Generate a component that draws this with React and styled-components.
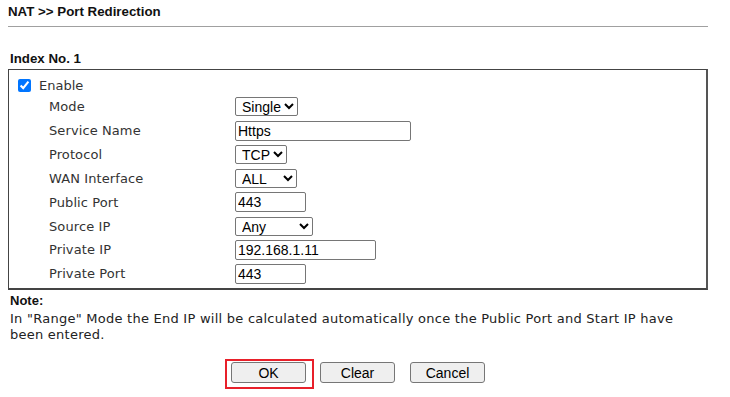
import React from "react";
import styled, { createGlobalStyle } from "styled-components";

const Global = createGlobalStyle`
  html, body { margin: 0; padding: 0; background: #fff; }
  body { font-family: "DejaVu Sans", Verdana, sans-serif; color: #333; }
`;

const Page = styled.div`
  width: 730px;
  height: 397px;
  padding: 0 22px 0 8px;
  box-sizing: border-box;
  overflow: hidden;
`;

const Title = styled.div`
  font-family: "Liberation Sans", Arial, sans-serif;
  font-weight: bold;
  font-size: 13.3px;
  color: #111;
  padding-top: 5px;
  height: 14px;
  line-height: 14px;
`;

const Rule = styled.div`
  height: 1px;
  background: #a0a0a0;
  margin-top: 7px;
`;

const Heading = styled.div`
  font-family: "Liberation Sans", Arial, sans-serif;
  font-weight: bold;
  font-size: 13.3px;
  color: #111;
  margin-top: 25px;
  padding-left: 2px;
  line-height: 14px;
  height: 15px;
`;

const Box = styled.div`
  margin-top: 2px;
  border: 1px solid #444;
  border-right-width: 2px;
  border-bottom-width: 2px;
  border-right-color: #555;
  height: 221px;
  box-sizing: border-box;
  padding: 6px 0 0 9px;
`;

const EnableRow = styled.label`
  display: flex;
  align-items: center;
  gap: 8px;
  font-size: 13px;
  height: 18px;
`;

const Check = styled.input`
  margin: 0;
  width: 13px;
  height: 13px;
  accent-color: #0075ff;
`;

const Grid = styled.div`
  display: grid;
  grid-template-columns: 186px 1fr;
  grid-auto-rows: 23.85px;
  margin-left: 31px;
  margin-top: 1px;
`;

const Label = styled.div`
  font-size: 13px;
  letter-spacing: 0.1px;
  display: flex;
  align-items: center;
  color: #333;
`;

const Cell = styled.div`
  display: flex;
  align-items: center;
`;

const Select = styled.select`
  font-family: "Liberation Sans", Arial, sans-serif;
  font-size: 14px;
  color: #000;
  width: ${(p) => p.$w}px;
  height: 19px;
  border: 1px solid #767676;
  border-radius: 2px;
  background: #fff;
  padding: 0 0 0 2px;
  margin: 0;
  box-sizing: border-box;
`;

const Input = styled.input`
  font-family: "Liberation Sans", Arial, sans-serif;
  font-size: 14px;
  color: #000;
  width: ${(p) => p.$w}px;
  height: 20px;
  border: 1px solid #767676;
  border-radius: 2px;
  padding: 0 2px;
  margin: 0;
  box-sizing: border-box;
`;

const NoteTitle = styled.div`
  font-family: "Liberation Sans", Arial, sans-serif;
  font-weight: bold;
  font-size: 13px;
  color: #111;
  margin-top: 3px;
  padding-left: 2px;
  line-height: 15px;
`;

const NoteText = styled.div`
  font-size: 13px;
  letter-spacing: 0.25px;
  line-height: 16px;
  padding-left: 2px;
  margin-top: 3px;
  color: #222;
`;

const Buttons = styled.div`
  display: flex;
  align-items: flex-start;
  margin-top: 16px;
  padding-left: 217px;
`;

const Highlight = styled.div`
  border: 2px solid #e8202a;
  padding: 1px 6px 4px 4px;
  display: flex;
`;

const Button = styled.button`
  font-family: "Liberation Sans", Arial, sans-serif;
  font-size: 14px;
  color: #000;
  width: 75px;
  height: 21px;
  background: #efefef;
  border: 1px solid #767676;
  border-radius: 3px;
  padding: 0;
  margin: ${(p) => (p.$ml ? 3 : 0)}px 0 0 ${(p) => p.$ml || 0}px;
`;

const rows = [
  ["Mode", "select", 63, "Single"],
  ["Service Name", "input", 176, "Https"],
  ["Protocol", "select", 52, "TCP"],
  ["WAN Interface", "select", 62, "ALL"],
  ["Public Port", "input", 71, "443"],
  ["Source IP", "select", 78, "Any"],
  ["Private IP", "input", 141, "192.168.1.11"],
  ["Private Port", "input", 71, "443"],
];

export default function App() {
  return (
    <Page>
      <Global />
      <Title>NAT &gt;&gt; Port Redirection</Title>
      <Rule />
      <Heading>Index No. 1</Heading>
      <Box>
        <EnableRow>
          <Check type="checkbox" defaultChecked />
          Enable
        </EnableRow>
        <Grid>
          {rows.map(([label, kind, w, val]) => (
            <React.Fragment key={label}>
              <Label>{label}</Label>
              <Cell>
                {kind === "select" ? (
                  <Select $w={w} defaultValue={val}>
                    <option>{val}</option>
                  </Select>
                ) : (
                  <Input $w={w} defaultValue={val} />
                )}
              </Cell>
            </React.Fragment>
          ))}
        </Grid>
      </Box>
      <NoteTitle>Note:</NoteTitle>
      <NoteText>
        In "Range" Mode the End IP will be calculated automatically once the Public Port and Start IP have
        <br />
        been entered.
      </NoteText>
      <Buttons>
        <Highlight>
          <Button>OK</Button>
        </Highlight>
        <Button $ml={6}>Clear</Button>
        <Button $ml={15}>Cancel</Button>
      </Buttons>
    </Page>
  );
}
